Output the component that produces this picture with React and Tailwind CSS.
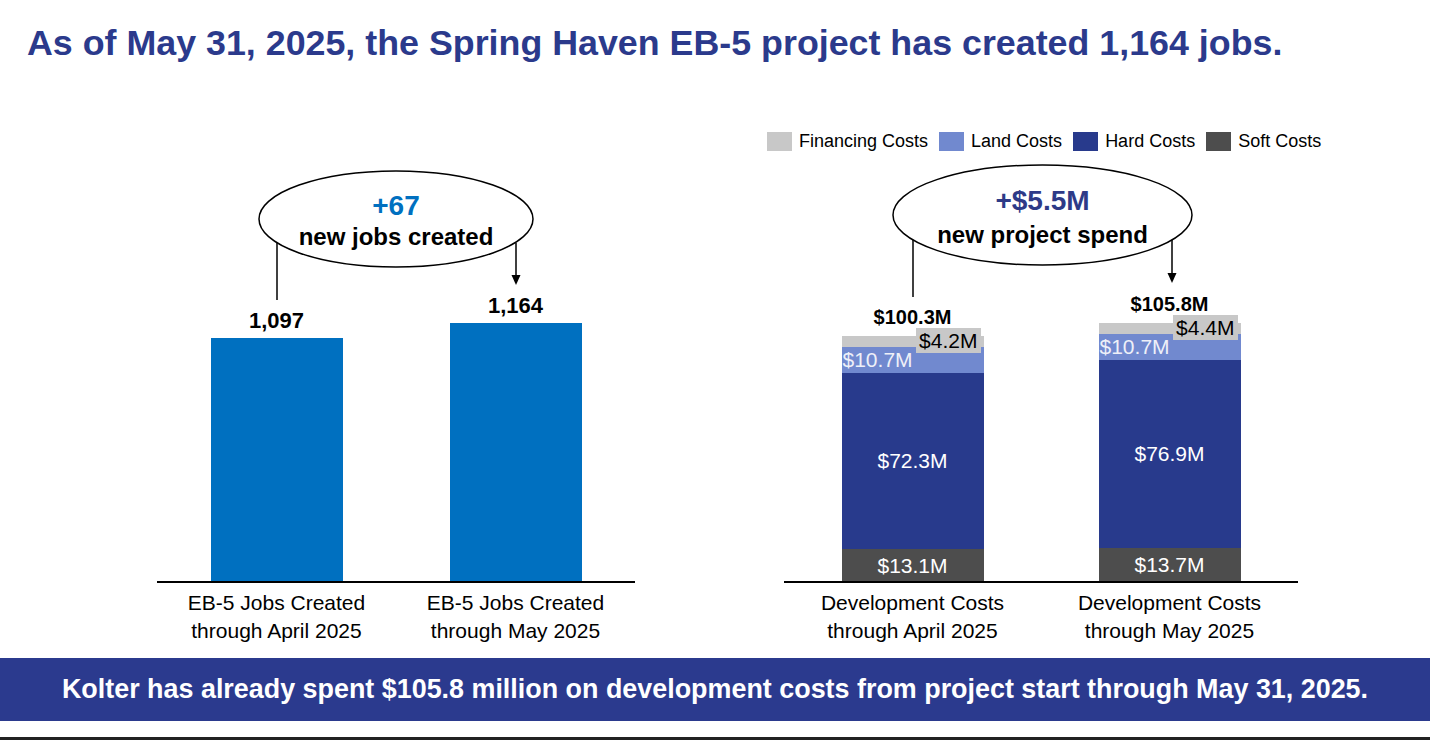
import React from "react";

const jobs = [
  { value: 1097, label: "1,097", line1: "EB-5 Jobs Created", line2: "through April 2025" },
  { value: 1164, label: "1,164", line1: "EB-5 Jobs Created", line2: "through May 2025" },
];

const costs = [
  { total: "$100.3M", fin: 4.2, land: 10.7, hard: 72.3, soft: 13.1, line2: "through April 2025" },
  { total: "$105.8M", fin: 4.4, land: 10.7, hard: 76.9, soft: 13.7, line2: "through May 2025" },
];

const JOB_SCALE = 0.2215; // px per job
const COST_SCALE = 2.44; // px per $M

const legend = [
  { name: "Financing Costs", color: "bg-[#c8c8c8]" },
  { name: "Land Costs", color: "bg-[#7189cf]" },
  { name: "Hard Costs", color: "bg-[#283a8c]" },
  { name: "Soft Costs", color: "bg-[#4d4d4d]" },
];

const JobsChart = () => (
  <div className="ml-[157px] w-[478px] flex flex-col">
    <div className="h-[42px]" />
    {/* plot */}
    <div className="relative h-[419px] flex items-end">
      <svg className="absolute inset-0 pointer-events-none" width="478" height="419">
        <ellipse cx="239" cy="57" rx="137" ry="48" fill="white" stroke="black" strokeWidth="1.5" />
        <line x1="120" y1="81" x2="120" y2="138" stroke="black" strokeWidth="1.5" />
        <line x1="359" y1="81" x2="359" y2="114" stroke="black" strokeWidth="1.5" />
        <polygon points="354.5,113 363.5,113 359,123" fill="black" />
      </svg>
      <div className="absolute left-[102px] top-[9px] w-[274px] flex flex-col items-center pt-[20px]">
        <div className="text-[28px] leading-[30px] font-bold text-[#0070c0]">+67</div>
        <div className="mt-[2px] text-[24px] leading-[28px] font-bold text-black">new jobs created</div>
      </div>
      {jobs.map((j) => (
        <div key={j.label} className="w-[239px] flex flex-col items-center justify-end">
          <div className="mb-[5px] text-[22px] leading-[24px] font-bold text-black">{j.label}</div>
          <div className="w-[132px] bg-[#0070c0]" style={{ height: j.value * JOB_SCALE }} />
        </div>
      ))}
    </div>
    <div className="h-[2px] bg-black" />
    <div className="flex pt-[6px]">
      {jobs.map((j) => (
        <div key={j.label} className="w-[239px] text-center text-[21px] leading-[28px] text-black">
          <div>{j.line1}</div>
          <div>{j.line2}</div>
        </div>
      ))}
    </div>
  </div>
);

const CostsChart = () => (
  <div className="ml-[149px] w-[514px] flex flex-col">
    {/* legend */}
    <div className="h-[42px] ml-[-17px] flex items-center whitespace-nowrap text-[18px] text-black">
      {legend.map((l, i) => (
        <div key={l.name} className={`flex items-center ${i > 0 ? "ml-[11px]" : ""}`}>
          <div className={`w-[25px] h-[19px] ${l.color}`} />
          <span className="ml-[7px]">{l.name}</span>
        </div>
      ))}
    </div>
    {/* plot */}
    <div className="relative h-[419px] flex items-end">
      <svg className="absolute inset-0 pointer-events-none" width="514" height="419">
        <ellipse cx="258.5" cy="53" rx="149.5" ry="50" fill="white" stroke="black" strokeWidth="1.5" />
        <line x1="129" y1="78" x2="129" y2="135" stroke="black" strokeWidth="1.5" />
        <line x1="388" y1="78" x2="388" y2="112" stroke="black" strokeWidth="1.5" />
        <polygon points="383.5,111 392.5,111 388,121" fill="black" />
      </svg>
      <div className="absolute left-[109px] top-[3px] w-[299px] flex flex-col items-center pt-[21px]">
        <div className="text-[28px] leading-[30px] font-bold text-[#2e3a87]">+$5.5M</div>
        <div className="mt-[5px] text-[24px] leading-[28px] font-bold text-black">new project spend</div>
      </div>
      {costs.map((c) => (
        <div key={c.total} className="w-[257px] flex flex-col items-center justify-end">
          <div className="mb-[8px] text-[20px] leading-[22px] font-bold text-black">{c.total}</div>
          <div className="relative w-[142px] flex flex-col">
            <div className="bg-[#c8c8c8]" style={{ height: c.fin * COST_SCALE }} />
            <div className="absolute top-[-8px] right-[3px] h-[25px] px-[3px] bg-[#c8c8c8] flex items-center text-[21px] text-black leading-none">
              ${c.fin}M
            </div>
            <div className="bg-[#7189cf] flex items-center pl-[1px] text-[21px] leading-none text-[#eef0f8]" style={{ height: c.land * COST_SCALE }}>
              ${c.land}M
            </div>
            <div className="bg-[#283a8c] flex items-center justify-center text-[21px] leading-none text-white" style={{ height: c.hard * COST_SCALE }}>
              ${c.hard}M
            </div>
            <div className="bg-[#4d4d4d] flex items-center justify-center text-[21px] leading-none text-white" style={{ height: c.soft * COST_SCALE }}>
              ${c.soft}M
            </div>
          </div>
        </div>
      ))}
    </div>
    <div className="h-[2px] bg-black" />
    <div className="flex pt-[6px]">
      {costs.map((c) => (
        <div key={c.total} className="w-[257px] text-center text-[21px] leading-[28px] text-black">
          <div>Development Costs</div>
          <div>{c.line2}</div>
        </div>
      ))}
    </div>
  </div>
);

export default function App() {
  return (
    <div className="w-[1430px] h-[740px] bg-white overflow-hidden flex flex-col font-['Liberation_Sans',Arial,sans-serif]">
      {/* Title */}
      <h1 className="pt-[23px] pl-[27px] text-[35.8px] leading-[40px] font-bold text-[#2b3a8c] whitespace-nowrap">
        As of May 31, 2025, the Spring Haven EB-5 project has created 1,164 jobs.
      </h1>

      {/* Charts */}
      <div className="mt-[57px] flex">
        <JobsChart />
        <CostsChart />
      </div>

      {/* Banner */}
      <div className="mt-[13px] h-[63px] bg-[#2b3a8e] flex items-center justify-center text-white text-[26.9px] font-bold whitespace-nowrap">
        Kolter has already spent $105.8 million on development costs from project start through May 31, 2025.
      </div>
      <div className="mt-auto h-[3px] bg-[#222]" />
    </div>
  );
}
